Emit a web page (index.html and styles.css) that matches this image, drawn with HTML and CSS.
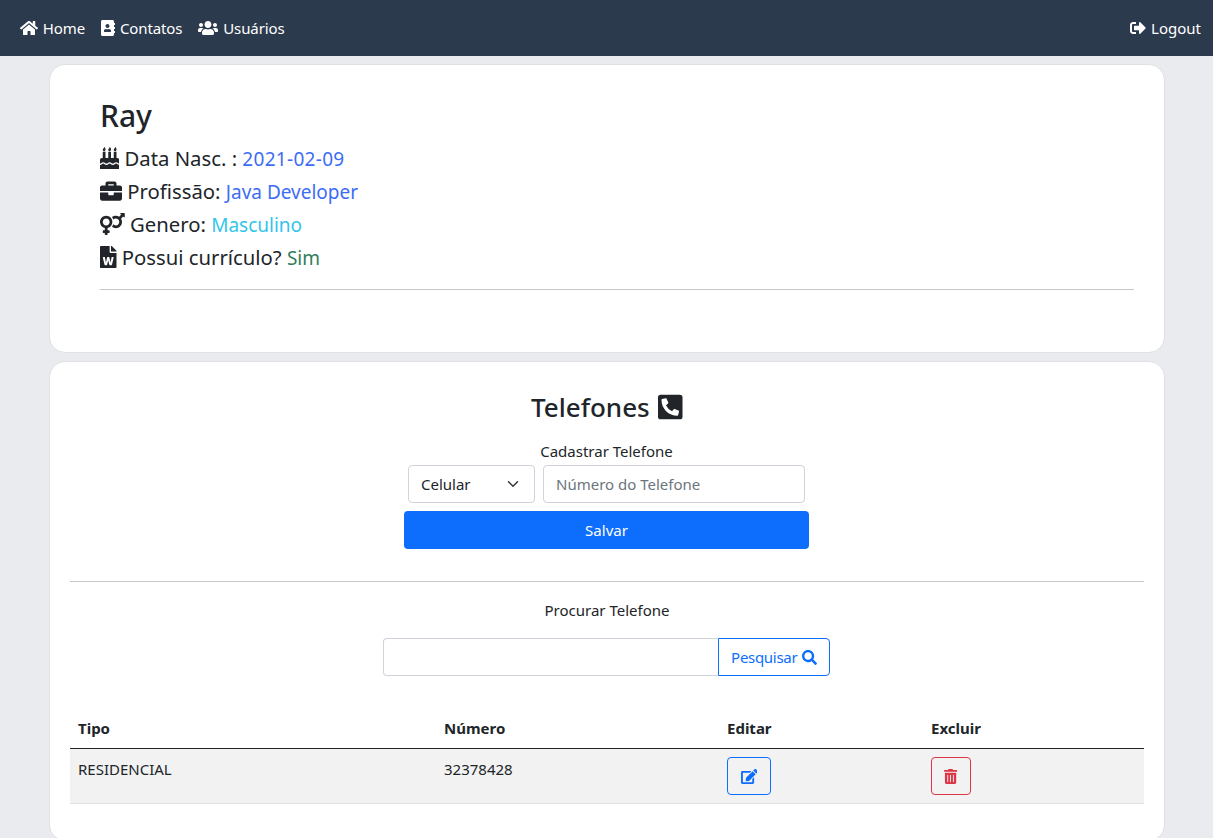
FILE: index.html
```html
<!DOCTYPE html>
<html lang="pt-BR">
	<head>
		<meta charset="UTF-8">
		<title>Contato</title>
		<link rel="stylesheet" href="styles.css">
	</head>
	<body>
		<nav class="navbar">
			<a class="nav-link" href="#"><svg class="icon" viewBox="0 0 576 512"><path d="M280.37 148.26L96 300.11V464a16 16 0 0 0 16 16l112.06-.29a16 16 0 0 0 15.92-16V368a16 16 0 0 1 16-16h64a16 16 0 0 1 16 16v95.64a16 16 0 0 0 16 16.05L464 480a16 16 0 0 0 16-16V300L295.67 148.26a12.19 12.19 0 0 0-15.3 0zM571.6 251.47L488 182.56V44.05a12 12 0 0 0-12-12h-56a12 12 0 0 0-12 12v72.61L318.47 43a48 48 0 0 0-61 0L4.34 251.47a12 12 0 0 0-1.6 16.9l25.5 31A12 12 0 0 0 45.15 301l235.22-193.74a12.19 12.19 0 0 1 15.3 0L530.9 301a12 12 0 0 0 16.9-1.6l25.5-31a12 12 0 0 0-1.7-16.93z"/></svg> Home</a>
			<a class="nav-link" href="#"><svg class="icon" viewBox="0 0 448 512"><path d="M436 160c6.6 0 12-5.4 12-12v-40c0-6.6-5.4-12-12-12h-20V48c0-26.5-21.5-48-48-48H48C21.5 0 0 21.5 0 48v416c0 26.5 21.5 48 48 48h320c26.5 0 48-21.5 48-48v-48h20c6.6 0 12-5.4 12-12v-40c0-6.6-5.4-12-12-12h-20v-64h20c6.6 0 12-5.4 12-12v-40c0-6.6-5.4-12-12-12h-20v-64h20zm-228-32c35.3 0 64 28.7 64 64s-28.7 64-64 64-64-28.7-64-64 28.7-64 64-64zm112 236.8c0 10.6-10 19.2-22.4 19.2H118.4C106 384 96 375.4 96 364.8v-19.2c0-31.8 30.1-57.6 67.2-57.6h5c12.3 5.1 25.7 8 39.8 8s27.6-2.9 39.8-8h5c37.1 0 67.2 25.8 67.2 57.6v19.2z"/></svg> Contatos</a>
			<a class="nav-link" href="#"><svg class="icon" viewBox="0 0 640 512"><path d="M96 224c35.3 0 64-28.7 64-64s-28.7-64-64-64-64 28.7-64 64 28.7 64 64 64zm448 0c35.3 0 64-28.7 64-64s-28.7-64-64-64-64 28.7-64 64 28.7 64 64 64zm32 32h-64c-17.6 0-33.5 7.1-45.1 18.6 40.3 22.1 68.9 62 75.1 109.4h66c17.7 0 32-14.3 32-32v-32c0-35.3-28.7-64-64-64zm-256 0c61.9 0 112-50.1 112-112S381.9 32 320 32 208 82.1 208 144s50.1 112 112 112zm76.8 32h-8.3c-20.8 10-43.9 16-68.5 16s-47.6-6-68.5-16h-8.3C179.6 288 128 339.6 128 403.2V432c0 26.5 21.5 48 48 48h288c26.5 0 48-21.5 48-48v-28.8c0-63.6-51.6-115.2-115.2-115.2zm-223.7-13.4C161.5 263.1 145.6 256 128 256H64c-35.3 0-64 28.7-64 64v32c0 17.7 14.3 32 32 32h65.9c6.3-47.4 34.9-87.3 75.2-109.4z"/></svg> Usuários</a>
			<a class="nav-link nav-right" href="#"><svg class="icon" viewBox="0 0 512 512"><path d="M497 273L329 441c-15 15-41 4.5-41-17v-96H152c-13.3 0-24-10.7-24-24v-96c0-13.3 10.7-24 24-24h136V88c0-21.4 25.9-32 41-17l168 168c9.3 9.4 9.3 24.6 0 34zM192 436v-40c0-6.6-5.4-12-12-12H96c-17.7 0-32-14.3-32-32V160c0-17.7 14.3-32 32-32h84c6.6 0 12-5.4 12-12V76c0-6.6-5.4-12-12-12H96c-53 0-96 43-96 96v192c0 53 43 96 96 96h84c6.6 0 12-5.4 12-12z"/></svg> Logout</a>
		</nav>
		<main class="container">
			<section class="card card-info">
				<h2>Ray</h2>
				<p class="info"><svg class="icon" viewBox="0 0 448 512"><path d="M448 384c-28.02 0-31.26-32-74.5-32-43.43 0-46.825 32-74.75 32-27.695 0-31.454-32-74.75-32-42.842 0-47.218 32-74.5 32-28.148 0-31.202-32-74.75-32-43.547 0-46.653 32-74.75 32v-80c0-26.5 21.5-48 48-48h16V112h64v144h64V112h64v144h64V112h64v144h16c26.5 0 48 21.5 48 48v80zm0 128H0v-96c43.356 0 46.767-32 74.75-32 27.951 0 31.253 32 74.75 32 42.843 0 47.217-32 74.5-32 28.148 0 31.201 32 74.75 32 43.357 0 46.767-32 74.75-32 27.488 0 31.252 32 74.5 32v96zM96 96c-17.75 0-32-14.25-32-32 0-31 32-23 32-64 12 0 32 29.5 32 56s-14.25 40-32 40zm128 0c-17.75 0-32-14.25-32-32 0-31 32-23 32-64 12 0 32 29.5 32 56s-14.25 40-32 40zm128 0c-17.75 0-32-14.25-32-32 0-31 32-23 32-64 12 0 32 29.5 32 56s-14.25 40-32 40z"/></svg> Data Nasc. : <span class="val-blue val-date">2021-02-09</span></p>
				<p class="info"><svg class="icon" viewBox="0 0 512 512"><path d="M320 336c0 8.84-7.16 16-16 16h-96c-8.84 0-16-7.16-16-16v-48H0v144c0 25.6 22.4 48 48 48h416c25.6 0 48-22.4 48-48V288H320v48zm144-208h-80V80c0-25.6-22.4-48-48-48H176c-25.6 0-48 22.4-48 48v48H48c-25.6 0-48 22.4-48 48v80h512v-80c0-25.6-22.4-48-48-48zm-144 0H192V96h128v32z"/></svg> Profissão: <span class="val-blue">Java Developer</span></p>
				<p class="info"><svg class="icon" viewBox="0 0 576 512"><path d="M564 0h-79c-10.7 0-16 12.9-8.5 20.5l16.9 16.9-48.7 48.7C422.5 72.1 396.2 64 368 64c-33.7 0-64.6 11.6-89.2 30.9 14 16.7 25 36 32.1 57.1 14.5-14.8 34.7-24 57.1-24 44.1 0 80 35.9 80 80s-35.9 80-80 80c-22.3 0-42.6-9.2-57.1-24-7.1 21.1-18 40.4-32.1 57.1 24.5 19.4 55.5 30.9 89.2 30.9 79.5 0 144-64.5 144-144 0-28.2-8.1-54.5-22.1-76.7l48.7-48.7 16.9 16.9c2.4 2.4 5.4 3.5 8.4 3.5 6.2 0 12.1-4.8 12.1-12V12c0-6.6-5.4-12-12-12zM144 64C64.5 64 0 128.5 0 208c0 68.5 47.9 125.9 112 140.4V400H76c-6.6 0-12 5.4-12 12v40c0 6.6 5.4 12 12 12h36v36c0 6.6 5.4 12 12 12h40c6.6 0 12-5.4 12-12v-36h36c6.6 0 12-5.4 12-12v-40c0-6.6-5.4-12-12-12h-36v-51.6c64.1-14.6 112-71.9 112-140.4 0-79.5-64.5-144-144-144zm0 224c-44.1 0-80-35.9-80-80s35.9-80 80-80 80 35.9 80 80-35.9 80-80 80z"/></svg> Genero: <span class="val-cyan">Masculino</span></p>
				<p class="info"><svg class="icon" viewBox="0 0 384 512"><path d="M224 136V0H24C10.7 0 0 10.7 0 24v464c0 13.3 10.7 24 24 24h336c13.3 0 24-10.7 24-24V160H248c-13.2 0-24-10.8-24-24zm57.1 120H305c7.7 0 13.4 7.1 11.7 14.7l-38 168c-1.2 5.5-6.1 9.3-11.7 9.3h-38c-5.5 0-10.3-3.8-11.6-9.1-25.8-103.5-20.8-81.2-25.6-110.5h-.5c-1.1 14.3-2.4 17.4-25.6 110.5-1.3 5.3-6.1 9.1-11.6 9.1H117c-5.6 0-10.5-3.9-11.7-9.4l-37.8-168c-1.7-7.5 4-14.6 11.7-14.6h24.5c5.7 0 10.7 4 11.8 9.7 15.6 78 20.1 109.5 21 122.2 1.6-10.2 7.3-32.7 29.4-122.7 1.3-5.4 6.1-9.1 11.7-9.1h29.1c5.6 0 10.4 3.8 11.7 9.2 24 100.4 28.8 124 29.6 129.4-.2-11.2-2.6-17.8 21.6-129.2 1-5.6 5.9-9.5 11.5-9.5zM384 121.9v6.1H256V0h6.1c6.4 0 12.5 2.5 17 7l97.9 98c4.5 4.5 7 10.6 7 16.9z"/></svg> Possui currículo? <span class="val-green">Sim</span></p>
				<hr>
			</section>
			<section class="card card-phones">
				<h3>Telefones <svg class="icon" viewBox="0 0 448 512"><path d="M400 32H48A48 48 0 0 0 0 80v352a48 48 0 0 0 48 48h352a48 48 0 0 0 48-48V80a48 48 0 0 0-48-48zm-16.39 307.37l-15 65A15 15 0 0 1 354 416C194 416 64 286.29 64 126a15.7 15.7 0 0 1 11.63-14.61l65-15A18.23 18.23 0 0 1 144 96a16.27 16.27 0 0 1 13.79 9.09l30 70A17.9 17.9 0 0 1 189 181a17 17 0 0 1-5.5 11.61l-37.89 31a231.91 231.91 0 0 0 110.78 110.78l31-37.89A17 17 0 0 1 299 291a17.85 17.85 0 0 1 5.91 1.21l70 30A16.25 16.25 0 0 1 384 336a17.41 17.41 0 0 1-.39 3.37z"/></svg></h3>
				<form class="phone-form">
					<label class="form-label">Cadastrar Telefone</label>
					<div class="form-row">
						<div class="select">Celular <svg class="chevron" viewBox="0 0 16 16"><path fill="none" stroke="#343a40" stroke-linecap="round" stroke-linejoin="round" stroke-width="2" d="M2 5l6 6 6-6"/></svg></div>
						<input class="input input-phone" type="text" placeholder="Número do Telefone">
					</div>
					<button class="btn-save" type="button">Salvar</button>
				</form>
				<hr>
				<p class="search-label">Procurar Telefone</p>
				<div class="search-group">
					<input class="input input-search" type="text">
					<button class="btn btn-blue btn-search" type="button">Pesquisar <svg class="icon" viewBox="0 0 512 512"><path d="M505 442.7L405.3 343c-4.5-4.5-10.6-7-17-7H372c27.6-35.3 44-79.7 44-128C416 93.1 322.9 0 208 0S0 93.1 0 208s93.1 208 208 208c48.3 0 92.7-16.4 128-44v16.3c0 6.4 2.5 12.5 7 17l99.7 99.7c9.4 9.4 24.6 9.4 33.9 0l28.3-28.3c9.4-9.4 9.4-24.6.1-34zM208 336c-70.7 0-128-57.2-128-128 0-70.7 57.2-128 128-128 70.7 0 128 57.2 128 128 0 70.7-57.2 128-128 128z"/></svg></button>
				</div>
				<table class="table">
					<colgroup>
						<col class="col-type">
						<col class="col-number">
						<col class="col-edit">
						<col>
					</colgroup>
					<thead>
						<tr>
							<th>Tipo</th>
							<th>Número</th>
							<th>Editar</th>
							<th>Excluir</th>
						</tr>
					</thead>
					<tbody>
						<tr>
							<td>RESIDENCIAL</td>
							<td>32378428</td>
							<td><button class="btn btn-blue btn-edit" type="button"><svg class="icon" viewBox="0 0 576 512"><path d="M402.6 83.2l90.2 90.2c3.8 3.8 3.8 10 0 13.8L274.4 405.6l-92.8 10.3c-12.4 1.4-22.9-9.1-21.5-21.5l10.3-92.8L388.8 83.2c3.8-3.8 10-3.8 13.8 0zm162-22.9l-48.8-48.8c-15.2-15.2-39.9-15.2-55.2 0l-35.4 35.4c-3.8 3.8-3.8 10 0 13.8l90.2 90.2c3.8 3.8 10 3.8 13.8 0l35.4-35.4c15.2-15.3 15.2-40 0-55.2zM384 346.2V448H64V128h229.8c3.2 0 6.2-1.3 8.5-3.5l40-40c7.6-7.6 2.2-20.5-8.5-20.5H48C21.5 64 0 85.5 0 112v352c0 26.5 21.5 48 48 48h352c26.5 0 48-21.5 48-48V306.2c0-10.7-12.9-16-20.5-8.5l-40 40c-2.2 2.3-3.5 5.3-3.5 8.5z"/></svg></button></td>
							<td><button class="btn btn-red btn-delete" type="button"><svg class="icon" viewBox="0 0 448 512"><path d="M32 464a48 48 0 0 0 48 48h288a48 48 0 0 0 48-48V128H32zm272-256a16 16 0 0 1 32 0v224a16 16 0 0 1-32 0zm-96 0a16 16 0 0 1 32 0v224a16 16 0 0 1-32 0zm-96 0a16 16 0 0 1 32 0v224a16 16 0 0 1-32 0zM432 32H312l-9.4-18.7A24 24 0 0 0 281.1 0H166.8a23.72 23.72 0 0 0-21.4 13.3L136 32H16A16 16 0 0 0 0 48v32a16 16 0 0 0 16 16h416a16 16 0 0 0 16-16V48a16 16 0 0 0-16-16z"/></svg></button></td>
						</tr>
					</tbody>
				</table>
			</section>
		</main>
	</body>
</html>
```

FILE: styles.css
```css
* {
	box-sizing: border-box;
}
html {
	overflow: hidden;
}
body {
	margin: 0;
	height: 838px;
	overflow: hidden;
	background: #e9ebef;
	color: #212529;
	font-family: "Noto Sans", "Open Sans", sans-serif;
	font-size: 15px;
	line-height: 24px;
}
.icon {
	height: 1em;
	width: auto;
	fill: currentColor;
	vertical-align: -0.125em;
}
hr {
	margin: 0;
	border: 0;
	border-top: 1px solid #c6c7c8;
}
.navbar {
	display: flex;
	align-items: center;
	height: 56px;
	padding: 0 4px 0 12px;
	background: #2c3a4d;
}
.nav-link {
	padding: 8px;
	color: #fff;
	letter-spacing: -0.1px;
	text-decoration: none;
}
.nav-link .icon {
	height: 16px;
	margin-right: 1px;
}
.nav-right {
	margin-left: auto;
	letter-spacing: 0;
}
.container {
	display: flex;
	flex-direction: column;
	gap: 8px;
	padding: 8px 48px 0 49px;
}
.card {
	flex: none;
	background: #fff;
	border: 1px solid #dfe1e5;
	border-radius: 16px;
}
.card-info {
	height: 289px;
	padding: 32px 30px 0 50px;
}
.card-info h2 {
	margin: 0 0 7px;
	font-size: 30px;
	font-weight: 500;
	line-height: 38px;
}
.info {
	height: 33px;
	margin: 0;
	font-size: 20.3px;
	line-height: 33px;
}
.info .icon {
	height: 22px;
	vertical-align: -3px;
}
.info span {
	font-size: 19px;
	line-height: 1;
}
.val-blue {
	color: #3d6cf5;
}
.val-date {
	letter-spacing: 0.3px;
}
.val-cyan {
	color: #33c5ea;
}
.val-green {
	color: #2f7d5a;
}
.card-info hr {
	margin-top: 15px;
}
.card-phones {
	height: 480px;
	padding: 28px 20px 0;
	text-align: center;
}
.card-phones h3 {
	margin: 0 0 15px;
	font-size: 26px;
	font-weight: 500;
	line-height: 34px;
}
.card-phones h3 .icon {
	height: 28px;
	margin-left: 2px;
	vertical-align: -4px;
}
.phone-form {
	display: flex;
	flex-direction: column;
	align-items: center;
	padding-right: 1px;
}
.form-label {
	display: block;
	margin-bottom: 2px;
	line-height: 24px;
}
.form-row {
	display: flex;
	gap: 8px;
}
.select,
.input {
	height: 38px;
	border: 1px solid #ced4da;
	border-radius: 4px;
	background: #fff;
	color: #212529;
	font: inherit;
}
.select {
	display: flex;
	align-items: center;
	justify-content: space-between;
	width: 127px;
	padding: 0 15px 0 12px;
}
.chevron {
	width: 12px;
	height: 12px;
}
.input {
	padding: 0 12px;
}
.input::placeholder {
	color: #6c757d;
}
.input-phone {
	width: 262px;
}
.btn-save {
	width: 405px;
	height: 38px;
	margin-top: 8px;
	border: 0;
	border-radius: 4px;
	background: #0d6efd;
	color: #fff;
	font: inherit;
}
.card-phones hr {
	margin-top: 32px;
}
.search-label {
	margin: 16px 0;
}
.search-group {
	display: flex;
	justify-content: center;
	padding-right: 1px;
}
.input-search {
	width: 335px;
	border-radius: 4px 0 0 4px;
	border-right: 0;
}
.btn {
	height: 38px;
	border: 1px solid;
	border-radius: 4px;
	background: transparent;
	font: inherit;
}
.btn-blue {
	border-color: #0d6efd;
	color: #0d6efd;
}
.btn-red {
	border-color: #dc3545;
	color: #dc3545;
}
.btn-search {
	width: 112px;
	padding: 0;
	border-radius: 0 4px 4px 0;
	letter-spacing: -0.3px;
}
.btn-search .icon {
	margin-left: 1px;
}
.table {
	width: 100%;
	margin-top: 32px;
	border-collapse: collapse;
	table-layout: fixed;
	text-align: left;
}
.col-type {
	width: 366px;
}
.col-number {
	width: 283px;
}
.col-edit {
	width: 204px;
}
.table th {
	height: 40px;
	padding: 8px;
	border-bottom: 1px solid #212529;
	font-weight: 700;
}
.table td {
	height: 55px;
	padding: 8px;
	border-bottom: 1px solid #dee2e6;
	background: #f2f2f2;
	vertical-align: top;
}
.btn-edit {
	display: block;
	width: 44px;
}
.btn-delete {
	display: block;
	width: 40px;
}
```
